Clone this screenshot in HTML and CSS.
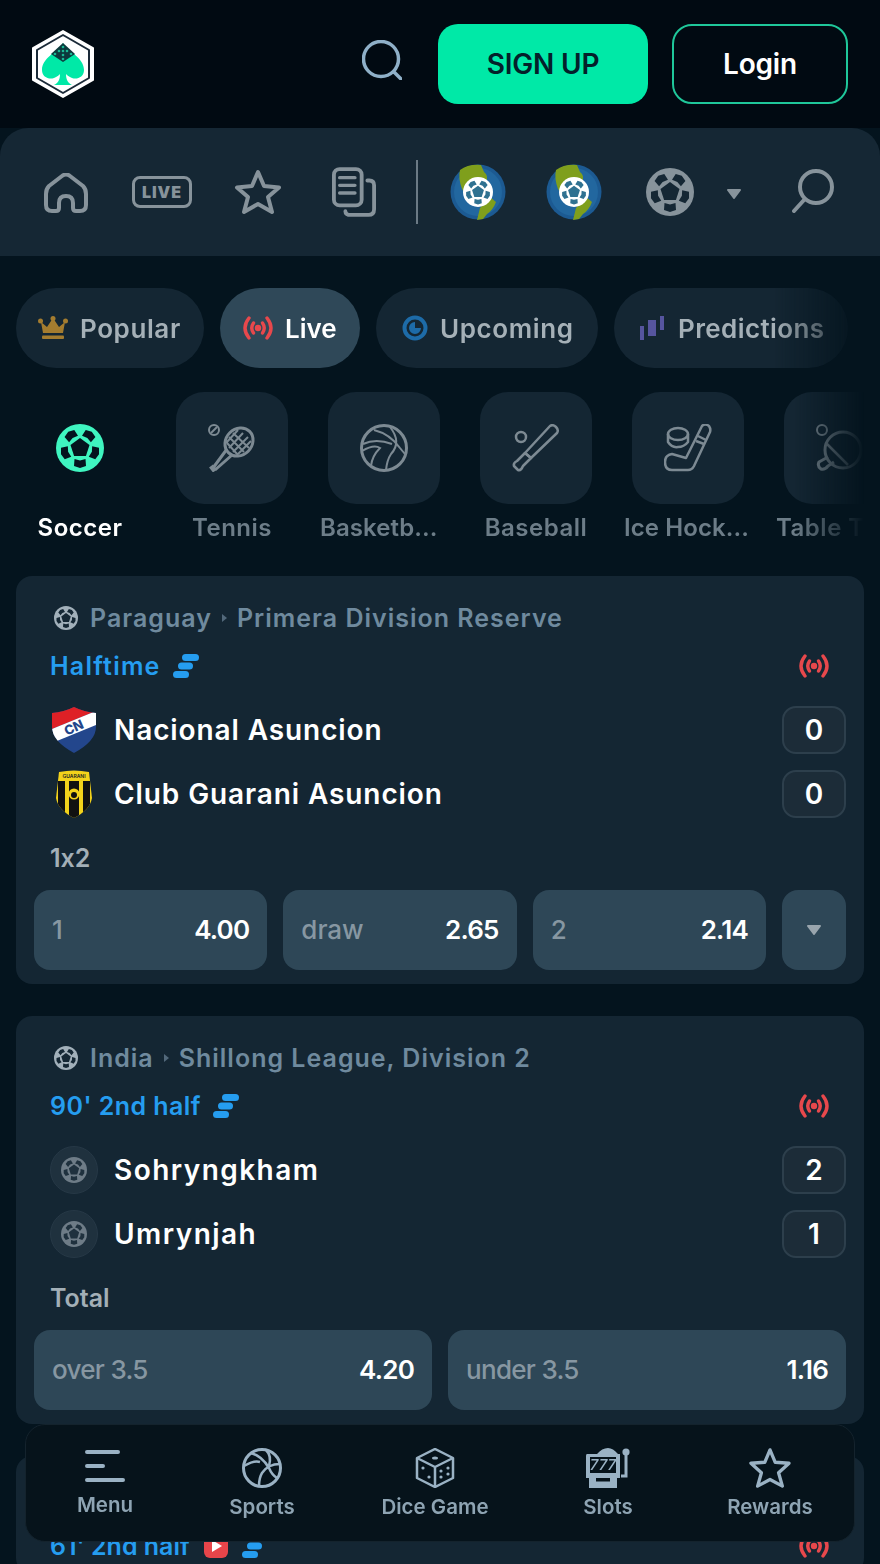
FILE: index.html
```html
<!DOCTYPE html>
<html lang="en">
<head>
    <meta charset="UTF-8">
    <title>Sports betting</title>
    <link rel="stylesheet" href="styles.css">
</head>
<body>

<svg class="defs" aria-hidden="true">
    <symbol id="ball" viewBox="0 0 48 48">
        <circle cx="24" cy="24" r="24" fill="currentColor"/>
        <g class="ball-hole">
            <polygon points="24,14 33.5,20.9 29.9,32.1 18.1,32.1 14.5,20.9"/>
            <polygon points="18.5,35 24,36.5 29.5,35 30,42 24,44 18,42"/>
            <polygon points="18.5,35 24,36.5 29.5,35 30,42 24,44 18,42" transform="rotate(72 24 24)"/>
            <polygon points="18.5,35 24,36.5 29.5,35 30,42 24,44 18,42" transform="rotate(144 24 24)"/>
            <polygon points="18.5,35 24,36.5 29.5,35 30,42 24,44 18,42" transform="rotate(216 24 24)"/>
            <polygon points="18.5,35 24,36.5 29.5,35 30,42 24,44 18,42" transform="rotate(288 24 24)"/>
        </g>
    </symbol>
    <symbol id="globe" viewBox="0 0 56 56">
        <circle cx="28" cy="28" r="27.5" fill="#1c5a92"/>
        <circle cx="28" cy="28" r="24" fill="#22679f"/>
        <path fill="#7f9f1c" d="M10 6Q18 0 31 1L34 8Q39 12 36 17L27 23L19 36L12 25Q8 14 10 6Z"/>
        <path fill="#7f9f1c" d="M27 56L30 44L40 33L46 38Q43 46 37 50L33 55Z"/>
    </symbol>
    <symbol id="live" viewBox="0 0 32 24">
        <g fill="none" stroke="currentColor" stroke-width="3.4" stroke-linecap="round">
            <path d="M7 2Q-1 12 7 22"/>
            <path d="M25 2Q33 12 25 22"/>
            <path d="M11.5 7Q8 12 11.5 17"/>
            <path d="M20.5 7Q24 12 20.5 17"/>
        </g>
        <circle cx="16" cy="12" r="3.2" fill="currentColor"/>
    </symbol>
    <symbol id="stats" viewBox="0 0 26 24">
        <rect x="9" y="0" width="17" height="7" rx="3.5" fill="currentColor"/>
        <rect x="5" y="8.5" width="15" height="7" rx="3.5" fill="currentColor"/>
        <rect x="0" y="17" width="16" height="7" rx="3.5" fill="currentColor"/>
    </symbol>
    <symbol id="caret" viewBox="0 0 16 10">
        <path d="M2 1H14L8 9Z" fill="currentColor" stroke="currentColor" stroke-width="2" stroke-linejoin="round"/>
    </symbol>
</svg>

<header class="topbar">
    <svg class="logo" viewBox="0 0 62 68">
        <polygon points="31,1 61,18 61,50 31,67 1,50 1,18" fill="#fff" stroke="#fff" stroke-width="2" stroke-linejoin="round"/>
        <polygon points="31,5 57,20 57,48 31,63 5,48 5,20" fill="#fff" stroke="#1b2a38" stroke-width="2" stroke-linejoin="round"/>
        <path fill="#00e9a7" d="M31 13C25 22 10 28 10 40C10 47 17 50 22 48C25 47 27 45 28 44C28 50 26 53 22 55L40 55C36 53 34 50 34 44C35 45 37 47 40 48C45 50 52 47 52 40C52 28 37 22 31 13Z"/>
        <polygon points="31,13 43,24 31,32 19,24" fill="#0c3a3d"/>
        <g fill="#19b893">
            <circle cx="31" cy="17" r="1.3"/><circle cx="27" cy="21" r="1.3"/><circle cx="31" cy="21" r="1.3"/>
            <circle cx="35" cy="21" r="1.3"/><circle cx="23" cy="24" r="1.3"/><circle cx="31" cy="25" r="1.3"/>
            <circle cx="39" cy="24" r="1.3"/><circle cx="31" cy="29" r="1.3"/>
        </g>
    </svg>
    <svg class="top-search" viewBox="0 0 40 40" fill="none" stroke="#8fb0c8" stroke-width="3.5" stroke-linecap="round">
        <circle cx="19" cy="19" r="17.5"/>
        <path d="M32 32L39 39"/>
    </svg>
    <a class="btn btn-signup">SIGN UP</a>
    <a class="btn btn-login">Login</a>
</header>

<nav class="mainnav">
    <div class="nav-item">
        <svg class="ic-home" viewBox="0 0 44 40" fill="none" stroke="#87939b" stroke-width="4" stroke-linejoin="round">
            <path d="M2 21Q2 16 5 13L18 3Q22 0 26 3L39 13Q42 16 42 21V32Q42 38 36 38H32Q29 38 29 35V30Q29 23 22 23Q15 23 15 30V35Q15 38 12 38H8Q2 38 2 32Z"/>
        </svg>
    </div>
    <div class="nav-item"><span class="live-badge">LIVE</span></div>
    <div class="nav-item">
        <svg class="ic-star" viewBox="0 0 48 46" fill="none" stroke="#87939b" stroke-width="4" stroke-linejoin="round">
            <polygon points="24,3 30,17 45,18.5 34,28 38,43 24,35 10,43 14,28 3,18.5 18,17"/>
        </svg>
    </div>
    <div class="nav-item">
        <svg class="ic-doc" viewBox="0 0 46 52" fill="none" stroke="#87939b" stroke-width="4" stroke-linecap="round">
            <rect x="2" y="2" width="29" height="38" rx="6"/>
            <path d="M8 11H24M8 19H24M8 27H24" stroke-width="3.5"/>
            <path d="M37 14H39Q44 14 44 19V44Q44 50 38 50H20Q14 50 14 46"/>
        </svg>
    </div>
    <span class="nav-divider"></span>
    <div class="nav-item"><span class="globe"><svg class="fill"><use href="#globe"/></svg><svg class="globe-ball"><use href="#ball"/></svg></span></div>
    <div class="nav-item"><span class="globe"><svg class="fill"><use href="#globe"/></svg><svg class="globe-ball"><use href="#ball"/></svg></span></div>
    <div class="nav-item"><svg class="nav-ball"><use href="#ball"/></svg></div>
    <svg class="nav-caret"><use href="#caret"/></svg>
    <svg class="nav-search" viewBox="0 0 42 44" fill="none" stroke="#87939b" stroke-width="4" stroke-linecap="round">
        <circle cx="24" cy="18" r="16"/>
        <path d="M12 31L2 42"/>
    </svg>
</nav>

<main class="content">
    <div class="tabs">
        <a class="tab tab-popular">
            <svg class="tab-ic" viewBox="0 0 30 24">
                <path fill="#a47c2f" d="M3 6L9 11L15 2L21 11L27 6L25 17H5Z"/>
                <circle cx="2.5" cy="5" r="2.5" fill="#a47c2f"/><circle cx="15" cy="2.5" r="2.5" fill="#a47c2f"/><circle cx="27.5" cy="5" r="2.5" fill="#a47c2f"/>
                <rect x="4" y="19.5" width="22" height="3.5" rx="1" fill="#a47c2f"/>
            </svg>
            Popular
        </a>
        <a class="tab tab-live active"><svg class="tab-ic live-red"><use href="#live"/></svg>Live</a>
        <a class="tab tab-upcoming">
            <svg class="tab-ic" viewBox="0 0 26 26">
                <circle cx="13" cy="13" r="10.5" fill="none" stroke="#1d6ba8" stroke-width="4"/>
                <path d="M13 7A6 6 0 1 0 19 13H13Z" fill="#1d6ba8"/>
            </svg>
            Upcoming
        </a>
        <a class="tab tab-pred">
            <svg class="tab-ic" viewBox="0 0 24 24" fill="#56559f">
                <rect x="0" y="10" width="4" height="14"/>
                <rect x="8" y="4" width="8" height="16"/>
                <rect x="20" y="0" width="4" height="14"/>
            </svg>
            Predictions
        </a>
    </div>

    <div class="sports">
        <div class="sport active">
            <div class="tile"><svg class="sport-ic soccer"><use href="#ball"/></svg></div>
            <div class="sport-name">Soccer</div>
        </div>
        <div class="sport">
            <div class="tile">
                <svg class="sport-ic" viewBox="0 0 48 48" fill="none" stroke="currentColor" stroke-width="2.5">
                    <circle cx="6" cy="6" r="5" stroke-width="2"/>
                    <path d="M3 9L9 3" stroke-width="2"/>
                    <ellipse cx="31" cy="18" rx="15" ry="13" transform="rotate(-45 31 18)" stroke-width="3"/>
                    <path d="M21 13L36 28M25 9L41 24M19 19L30 31M21 24L35 9M25 28L40 13M30 30L43 17M18 19L30 6" stroke-width="2"/>
                    <path d="M19 25L5 44M24 31L7 46" stroke-width="3"/>
                    <path d="M3 42L7 47" stroke-width="5"/>
                </svg>
            </div>
            <div class="sport-name">Tennis</div>
        </div>
        <div class="sport">
            <div class="tile">
                <svg class="sport-ic" viewBox="0 0 48 48" fill="none" stroke="currentColor" stroke-width="2">
                    <circle cx="24" cy="24" r="22.5" stroke-width="3"/>
                    <path d="M14 6Q30 10 40 24Q44 29 46 31"/>
                    <path d="M30 3Q42 18 31 30Q27 36 26 46"/>
                    <path d="M3 20Q16 14 32 20"/>
                    <path d="M2 27Q14 20 20 24Q12 32 11 42"/>
                </svg>
            </div>
            <div class="sport-name cut">Basketb...</div>
        </div>
        <div class="sport">
            <div class="tile">
                <svg class="sport-ic" viewBox="0 0 48 48" fill="none" stroke="currentColor" stroke-width="2.5" stroke-linejoin="round">
                    <circle cx="9" cy="13" r="5"/>
                    <path d="M38 2Q41 0 44 3Q47 6 45 9L19 34L13 29Z"/>
                    <path d="M13 29L19 34L11 42Q9 47 6 46L2 42Q1 39 5 37Z"/>
                </svg>
            </div>
            <div class="sport-name">Baseball</div>
        </div>
        <div class="sport">
            <div class="tile">
                <svg class="sport-ic" viewBox="0 0 48 48" fill="none" stroke="currentColor" stroke-width="2.5" stroke-linejoin="round">
                    <ellipse cx="14" cy="10" rx="10" ry="6"/>
                    <path d="M4 10V18Q8 24 14 23Q20 23 24 18V10"/>
                    <path d="M38 2Q41 -1 45 2Q47 5 46 8L30 42Q28 46 24 46H8Q1 46 1 38Q1 31 8 30L22 34Z"/>
                    <path d="M34 12L42 16M32 17L40 20"/>
                </svg>
            </div>
            <div class="sport-name cut">Ice Hock...</div>
        </div>
        <div class="sport">
            <div class="tile">
                <svg class="sport-ic" viewBox="0 0 48 48" fill="none" stroke="currentColor" stroke-width="2.5" stroke-linejoin="round">
                    <circle cx="6" cy="6" r="5" stroke-width="2"/>
                    <circle cx="27" cy="26" r="18" stroke-width="3"/>
                    <path d="M10 19L32 41" stroke-width="2.5"/>
                    <path d="M12 33L3 38Q1 42 5 45Q9 46 12 42L18 38" stroke-width="3"/>
                </svg>
            </div>
            <div class="sport-name">Table Tennis</div>
        </div>
    </div>

    <section class="card">
        <div class="league">
            <svg class="league-ic"><use href="#ball"/></svg>
            <span>Paraguay</span><i class="sep"></i><span>Primera Division Reserve</span>
        </div>
        <div class="status">
            <span class="status-text">Halftime</span>
            <svg class="status-ic"><use href="#stats"/></svg>
            <svg class="status-live live-red"><use href="#live"/></svg>
        </div>
        <div class="team">
            <span class="badge">
                <svg class="shield" viewBox="0 0 44 46">
                    <clipPath id="cn-clip"><path d="M22 0Q32 5 44 6V20Q44 34 22 46Q0 34 0 20V6Q12 5 22 0Z"/></clipPath>
                    <g clip-path="url(#cn-clip)">
                        <rect width="44" height="46" fill="#23468c"/>
                        <polygon points="0,0 44,0 44,4 0,22" fill="#de2026"/>
                        <polygon points="0,22 44,4 44,18 0,36" fill="#fff"/>
                    </g>
                    <text class="cn-text" x="22" y="25" transform="rotate(-24 22 21)">CN</text>
                </svg>
            </span>
            <span class="team-name">Nacional Asuncion</span>
            <span class="score">0</span>
        </div>
        <div class="team">
            <span class="badge">
                <svg class="shield-g" viewBox="0 0 36 48">
                    <clipPath id="gu-clip"><path d="M3 2Q18 -1 33 2L36 28Q34 40 18 48Q2 40 0 28Z"/></clipPath>
                    <g clip-path="url(#gu-clip)">
                        <rect width="36" height="48" fill="#f3d21b"/>
                        <rect x="2" y="11" width="7" height="37" fill="#111"/>
                        <rect x="13" y="11" width="10" height="37" fill="#111"/>
                        <rect x="27" y="11" width="7" height="37" fill="#111"/>
                        <circle cx="18" cy="24" r="5.5" fill="#f3d21b"/>
                        <circle cx="18" cy="25" r="3" fill="#111"/>
                    </g>
                    <text class="gu-text" x="18" y="8">GUARANI</text>
                </svg>
            </span>
            <span class="team-name">Club Guarani Asuncion</span>
            <span class="score">0</span>
        </div>
        <div class="market">1x2</div>
        <div class="odds">
            <a class="odd"><span>1</span><b>4.00</b></a>
            <a class="odd"><span>draw</span><b>2.65</b></a>
            <a class="odd"><span>2</span><b>2.14</b></a>
            <a class="odd odd-more"><svg class="caret-sm"><use href="#caret"/></svg></a>
        </div>
    </section>

    <section class="card">
        <div class="league">
            <svg class="league-ic"><use href="#ball"/></svg>
            <span>India</span><i class="sep"></i><span>Shillong League, Division 2</span>
        </div>
        <div class="status">
            <span class="status-text minute">90' 2nd half</span>
            <svg class="status-ic"><use href="#stats"/></svg>
            <svg class="status-live live-red"><use href="#live"/></svg>
        </div>
        <div class="team">
            <span class="badge badge-empty"><svg class="empty-ball"><use href="#ball"/></svg></span>
            <span class="team-name wide">Sohryngkham</span>
            <span class="score">2</span>
        </div>
        <div class="team">
            <span class="badge badge-empty"><svg class="empty-ball"><use href="#ball"/></svg></span>
            <span class="team-name wide">Umrynjah</span>
            <span class="score">1</span>
        </div>
        <div class="market">Total</div>
        <div class="odds">
            <a class="odd"><span class="tight">over 3.5</span><b>4.20</b></a>
            <a class="odd"><span class="tight">under 3.5</span><b>1.16</b></a>
        </div>
    </section>

    <section class="card">
        <div class="league"></div>
        <div class="status">
            <span class="status-text minute-short">61' 2nd half</span>
            <svg class="status-play" viewBox="0 0 24 24">
                <rect width="24" height="24" rx="6" fill="#e8454a"/>
                <path d="M8 6L18 12L8 18Z" fill="#fff"/>
            </svg>
            <svg class="status-ic"><use href="#stats"/></svg>
            <svg class="status-live live-red"><use href="#live"/></svg>
        </div>
    </section>
</main>

<footer class="bottombar">
    <a class="bb-item bb-menu">
        <svg class="bb-ic" viewBox="0 0 40 40" fill="none" stroke="currentColor" stroke-width="4" stroke-linecap="round">
            <path d="M2 4H33M2 18H18M2 32H38"/>
        </svg>
        Menu
    </a>
    <a class="bb-item">
        <svg class="bb-ic" viewBox="0 0 40 40" fill="none" stroke="currentColor" stroke-width="2.5">
            <circle cx="20" cy="20" r="18.5" stroke-width="3"/>
            <path d="M9 5Q20 8 27 20Q30 27 35 30"/>
            <path d="M24 2Q30 8 27 18M2 18Q12 12 18 14M38 16Q26 16 20 25Q17 30 17 38"/>
        </svg>
        Sports
    </a>
    <a class="bb-item">
        <svg class="bb-ic" viewBox="0 0 40 40" fill="none" stroke="currentColor" stroke-width="2.5" stroke-linejoin="round">
            <path d="M20 1L38 10V30L20 39L2 30V10Z"/>
            <path d="M2 10L20 19L38 10M20 19V39"/>
            <ellipse cx="20" cy="10" rx="3" ry="1.6" fill="currentColor" stroke="none"/>
            <g fill="currentColor" stroke="none">
                <circle cx="8" cy="20" r="1.6"/><circle cx="14" cy="29" r="1.6"/>
                <circle cx="26" cy="23" r="1.6"/><circle cx="33" cy="20" r="1.6"/>
                <circle cx="26" cy="29" r="1.6"/><circle cx="33" cy="26" r="1.6"/>
            </g>
        </svg>
        Dice Game
    </a>
    <a class="bb-item">
        <svg class="bb-ic bb-slot" viewBox="0 0 46 40">
            <path fill="currentColor" d="M2 6H12Q17 0 23 0Q28 0 33 6H35V30H32V40H4V30H1V8Q1 6 2 6Z"/>
            <rect x="5" y="9" width="26" height="16" fill="#06131b"/>
            <text class="slot-text" x="18" y="22">777</text>
            <rect x="11" y="30" width="14" height="3.5" fill="#06131b"/>
            <path d="M36 28H41V6" fill="none" stroke="currentColor" stroke-width="3"/>
            <circle cx="41" cy="4" r="3.6" fill="currentColor"/>
        </svg>
        Slots
    </a>
    <a class="bb-item">
        <svg class="bb-ic bb-wide" viewBox="0 0 44 42" fill="none" stroke="currentColor" stroke-width="3.5" stroke-linejoin="round">
            <polygon points="22,2 27.5,15 42,16 31,26 35,40 22,33 9,40 13,26 2,16 16.5,15"/>
        </svg>
        Rewards
    </a>
</footer>

</body>
</html>
```

FILE: styles.css
```css
html, body {
    margin: 0;
    height: 100%;
    overflow: hidden;
    background: #04141e;
    font-family: "Inter", "Liberation Sans", sans-serif;
    font-feature-settings: "calt" 0;
    color: #fff;
}

.defs {
    display: none;
}

.fill {
    width: 100%;
    height: 100%;
    display: block;
}

.ball-hole {
    fill: var(--hole, #152734);
}

.live-red {
    color: #e8484c;
}

/* top bar */
.topbar {
    height: 128px;
    box-sizing: border-box;
    background: #010a12;
    display: flex;
    align-items: center;
    padding: 0 32px;
}

.logo {
    width: 62px;
    height: 68px;
}

.top-search {
    width: 40px;
    height: 40px;
    margin-left: auto;
    margin-right: 36px;
    margin-top: -8px;
}

.btn {
    height: 80px;
    box-sizing: border-box;
    border-radius: 20px;
    display: flex;
    align-items: center;
    justify-content: center;
    font-weight: 600;
    font-size: 28px;
    letter-spacing: -.2px;
}

.btn-signup {
    width: 210px;
    background: #00e9a7;
    color: #04202a;
}

.btn-login {
    width: 176px;
    margin-left: 24px;
    border: 2px solid #1fc79a;
    color: #fff;
}

/* main nav */
.mainnav {
    height: 128px;
    box-sizing: border-box;
    background: #152734;
    border-radius: 28px 28px 0 0;
    display: flex;
    align-items: center;
    padding-left: 18px;
}

.nav-item {
    width: 96px;
    display: flex;
    justify-content: center;
    align-items: center;
}

.ic-home { width: 44px; height: 40px; margin-top: 2px; }
.ic-star { width: 48px; height: 46px; }
.ic-doc { width: 44px; height: 52px; }

.live-badge {
    width: 60px;
    height: 32px;
    box-sizing: border-box;
    border: 3.5px solid #87939b;
    border-radius: 8px;
    color: #87939b;
    font-weight: 900;
    font-size: 16px;
    letter-spacing: 1px;
    display: flex;
    align-items: center;
    justify-content: center;
}

.nav-divider {
    width: 2px;
    height: 64px;
    background: #6b7a85;
    margin: 0 12px 0 14px;
}

.globe {
    display: block;
    position: relative;
    width: 56px;
    height: 56px;
}

.globe-ball {
    position: absolute;
    left: 13px;
    top: 13px;
    width: 30px;
    height: 30px;
    color: #fff;
    --hole: #2f7191;
}

.nav-ball {
    width: 48px;
    height: 48px;
    color: #87939b;
}

.nav-caret {
    width: 16px;
    height: 10px;
    margin-left: 8px;
    margin-top: 3px;
    color: #87939b;
}

.nav-search {
    width: 42px;
    height: 44px;
    margin-left: 50px;
    margin-top: -2px;
}

/* tabs and sports */
.content {
    padding: 32px 16px 0;
}

.tabs {
    display: flex;
    gap: 16px;
    -webkit-mask-image: linear-gradient(to right, #000 calc(100% - 90px), transparent);
    mask-image: linear-gradient(to right, #000 calc(100% - 90px), transparent);
}

.tab {
    height: 80px;
    box-sizing: border-box;
    border-radius: 40px;
    background: #142633;
    color: #a5b0b7;
    display: flex;
    align-items: center;
    gap: 12px;
    flex: none;
    font-weight: 600;
    font-size: 26px;
    letter-spacing: .6px;
    white-space: nowrap;
    padding: 0 22px;
}

.tab.active {
    background: #2f4858;
    color: #fff;
}

.tab-popular { width: 188px; }
.tab-live { width: 140px; letter-spacing: 0; gap: 11px; }
.tab-upcoming { width: 222px; padding-left: 26px; }
.tab-pred { width: 234px; padding-left: 26px; gap: 14px; letter-spacing: .4px; }

.tab-ic {
    width: 30px;
    height: 24px;
    flex: none;
}

.tab-live .tab-ic { width: 32px; }
.tab-upcoming .tab-ic { width: 26px; height: 26px; }
.tab-pred .tab-ic { width: 24px; height: 24px; }

.sports {
    display: flex;
    gap: 24px;
    margin-top: 24px;
    overflow: hidden;
    -webkit-mask-image: linear-gradient(to right, #000 calc(100% - 70px), transparent);
    mask-image: linear-gradient(to right, #000 calc(100% - 70px), transparent);
}

.sport {
    width: 128px;
    flex: none;
}

.tile {
    width: 112px;
    height: 112px;
    margin: 0 auto;
    border-radius: 28px;
    background: #142633;
    display: flex;
    align-items: center;
    justify-content: center;
}

.sport.active .tile {
    background: none;
}

.sport-ic {
    width: 48px;
    height: 48px;
    color: #7d8a93;
}

.soccer {
    color: #3ff5c0;
    --hole: #04141e;
}

.sport-name {
    height: 32px;
    margin-top: 8px;
    font-size: 24px;
    line-height: 32px;
    font-weight: 600;
    letter-spacing: .5px;
    color: #6d7d88;
    text-align: center;
    white-space: nowrap;
    overflow: hidden;
}

.sport-name.cut {
    text-align: left;
    letter-spacing: .1px;
}

.sport.active .sport-name {
    color: #fff;
}

/* match cards */
.card {
    margin-top: 32px;
    background: #142633;
    border-radius: 16px;
    padding: 28px 18px 14px;
}

.league {
    height: 28px;
    margin-left: 20px;
    display: flex;
    align-items: center;
    font-size: 25px;
    font-weight: 600;
    letter-spacing: 1px;
    color: #6f8a9e;
    white-space: nowrap;
}

.league-ic {
    width: 24px;
    height: 24px;
    margin-right: 12px;
    color: #a2b0ba;
}

.sep {
    width: 0;
    height: 0;
    margin: 0 10px;
    border-left: 5px solid #52687a;
    border-top: 4px solid transparent;
    border-bottom: 4px solid transparent;
}

.status {
    height: 28px;
    margin: 20px 17px 0 16px;
    display: flex;
    align-items: center;
    gap: 12px;
    font-size: 25px;
    font-weight: 600;
    letter-spacing: 1.2px;
    color: #259df0;
}

.status-text.minute {
    letter-spacing: .45px;
}

.status-text.minute-short {
    letter-spacing: 0;
    margin-right: 2px;
}

.status-ic {
    width: 26px;
    height: 24px;
    color: #259df0;
}

.status-play {
    width: 24px;
    height: 24px;
    margin-right: 2px;
}

.status-live {
    width: 32px;
    height: 24px;
    margin-left: auto;
    margin-right: -1px;
}

.team {
    height: 48px;
    margin: 16px 0 0 16px;
    display: flex;
    align-items: center;
    gap: 16px;
}

.status + .team {
    margin-top: 26px;
}

.badge {
    width: 48px;
    height: 48px;
    flex: none;
    display: flex;
    align-items: center;
    justify-content: center;
}

.badge-empty {
    box-sizing: border-box;
    border-radius: 50%;
    background: #1f313e;
    border: 1px solid #263846;
}

.empty-ball {
    width: 26px;
    height: 26px;
    color: #6e7c87;
    --hole: #1f313e;
}

.shield { width: 44px; height: 46px; }
.shield-g { width: 36px; height: 48px; }

.cn-text {
    font-size: 13px;
    font-weight: 800;
    fill: #23468c;
    text-anchor: middle;
}

.gu-text {
    font-size: 5px;
    font-weight: 600;
    fill: #222;
    text-anchor: middle;
}

.team-name {
    font-size: 28px;
    font-weight: 600;
    letter-spacing: .9px;
    flex: 1;
}

.team-name.wide {
    letter-spacing: 1.45px;
}

.score {
    width: 64px;
    height: 48px;
    box-sizing: border-box;
    border: 2px solid #2d3f4c;
    border-radius: 14px;
    background: #1c2c38;
    display: flex;
    align-items: center;
    justify-content: center;
    font-size: 28px;
    font-weight: 600;
}

.market {
    height: 28px;
    margin: 26px 0 18px 16px;
    font-size: 25px;
    line-height: 28px;
    font-weight: 600;
    color: #a3afb7;
}

.odds {
    display: flex;
    gap: 16px;
}

.odd {
    flex: 1;
    height: 80px;
    box-sizing: border-box;
    border-radius: 16px;
    background: #2e4757;
    display: flex;
    align-items: center;
    justify-content: space-between;
    padding: 0 18px;
    font-size: 26px;
    line-height: 30px;
    font-weight: 500;
    color: #8797a2;
}

.odd b {
    font-weight: 600;
    letter-spacing: -.8px;
    color: #fff;
}

.odd .tight {
    letter-spacing: -.7px;
}

.odd-more {
    flex: none;
    width: 64px;
    padding: 0;
    justify-content: center;
}

.caret-sm {
    width: 16px;
    height: 10px;
    color: #99a5ad;
}

/* bottom bar, stays over the list */
.bottombar {
    position: fixed;
    left: 25px;
    right: 25px;
    bottom: 22px;
    height: 118px;
    box-sizing: border-box;
    background: #06131b;
    border: 1px solid #14232d;
    border-radius: 20px;
    display: grid;
    grid-template-columns: 158px 156px 190px 156px 168px;
    padding-top: 23px;
}

.bb-item {
    display: flex;
    flex-direction: column;
    align-items: center;
    gap: 6px;
    font-size: 20.5px;
    line-height: 26px;
    font-weight: 600;
    color: #8ea4b3;
}

.bb-menu {
    gap: 4px;
}

.bb-ic {
    width: 40px;
    height: 40px;
    color: #9ab2c4;
}

.bb-slot {
    width: 46px;
}

.bb-wide {
    width: 44px;
}

.slot-text {
    font-size: 15px;
    font-weight: 500;
    font-style: italic;
    fill: #9ab2c4;
    text-anchor: middle;
}
```
